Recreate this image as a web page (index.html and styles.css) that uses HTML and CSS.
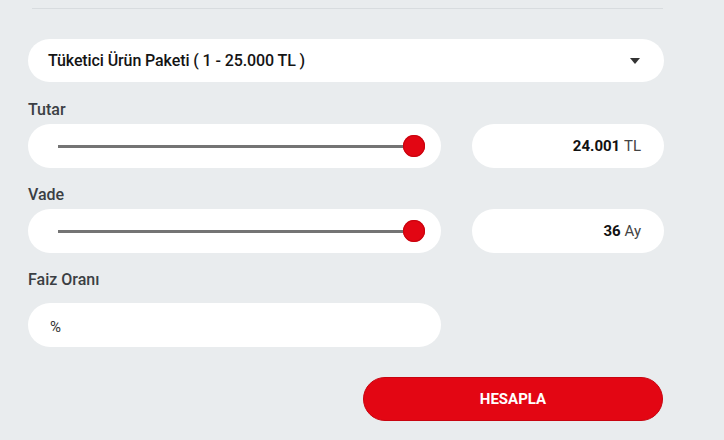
FILE: index.html
```html
<!DOCTYPE html>
<html lang="tr">
<head>
<meta charset="utf-8">
<title>Kredi Hesaplama</title>
<link rel="stylesheet" href="styles.css">
</head>
<body>
<div class="wrap">
  <div class="divider"></div>
  <div class="select">
    <span class="select-text">Tüketici Ürün Paketi ( 1 - 25.000 TL )</span>
    <svg class="caret" width="10" height="6" viewBox="0 0 10 6"><path d="M0 0H10L5 6Z" fill="#333"/></svg>
  </div>

  <div class="label label-tutar">Tutar</div>
  <div class="row">
    <div class="field slider">
      <div class="track"></div>
      <div class="thumb"></div>
    </div>
    <div class="field value"><b>24.001</b>&nbsp;<span class="unit">TL</span></div>
  </div>

  <div class="label label-vade">Vade</div>
  <div class="row">
    <div class="field slider">
      <div class="track"></div>
      <div class="thumb"></div>
    </div>
    <div class="field value"><b>36</b>&nbsp;<span class="unit">Ay</span></div>
  </div>

  <div class="label label-faiz">Faiz Oranı</div>
  <div class="row">
    <div class="field percent">%</div>
  </div>

  <div class="actions">
    <button class="btn">HESAPLA</button>
  </div>
</div>
</body>
</html>
```

FILE: styles.css
```css
html, body {
  margin: 0;
  padding: 0;
  background: #e9ecee;
}
body {
  font-family: Roboto, "Liberation Sans", Arial, sans-serif;
  color: #222;
}
.wrap {
  width: 636px;
  padding: 8px 0 0 28px;
}
.divider {
  height: 1px;
  margin: 0 1px 0 4px;
  background: #d8dcdf;
}
.select {
  margin-top: 30px;
  height: 43px;
  background: #fff;
  border-radius: 22px;
  display: flex;
  align-items: center;
  justify-content: space-between;
  padding: 0 24px 0 20px;
}
.select-text {
  font-size: 16px;
  font-weight: 500;
  color: #141414;
  letter-spacing: -0.1px;
}
.caret {
  display: block;
}
.label {
  font-size: 16px;
  line-height: 20px;
  font-weight: 500;
  color: #3b3f44;
  margin-bottom: 4px;
}
.label-tutar { margin-top: 18px; }
.label-vade { margin-top: 17px; }
.label-faiz { margin-top: 17px; margin-bottom: 13px; }
.row {
  display: grid;
  grid-template-columns: 413px 192px;
  column-gap: 31px;
}
.field {
  box-sizing: border-box;
  height: 44px;
  background: #fff;
  border-radius: 22px;
  display: flex;
  align-items: center;
}
.slider {
  padding: 0 16px 0 30px;
}
.track {
  flex: 1;
  height: 3px;
  background: #747474;
}
.thumb {
  width: 22px;
  height: 22px;
  margin-left: -2px;
  border-radius: 50%;
  background: #e20613;
  box-shadow: inset 0 0 0 1px #c9050f;
  flex: none;
}
.value {
  justify-content: flex-end;
  padding-right: 23px;
  font-size: 15px;
  color: #111;
}
.value b {
  font-weight: 700;
}
.unit {
  color: #444;
  font-weight: 400;
}
.percent {
  padding-left: 22px;
  padding-top: 4px;
  font-size: 15px;
  color: #333;
}
.actions {
  display: flex;
  justify-content: flex-end;
  margin-top: 30px;
}
.btn {
  width: 300px;
  height: 44px;
  margin-right: 1px;
  border: 1px solid #c8040f;
  border-radius: 22px;
  background: #e30613;
  color: #fff;
  font-family: Roboto, "Liberation Sans", Arial, sans-serif;
  font-size: 15px;
  font-weight: 700;
  letter-spacing: 0;
  cursor: pointer;
}
```
